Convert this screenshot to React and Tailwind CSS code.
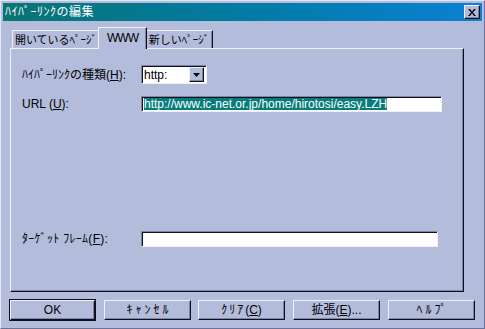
import React from 'react';

const FONT = { fontFamily: '"Liberation Sans", "Noto Sans CJK JP", sans-serif' };

// raised 3D edge used for buttons and tabs
const raised =
  'bg-[#b4bcdc] border-t border-l border-t-[#eef0fa] border-l-[#eef0fa] border-r border-b border-r-[#10101c] border-b-[#10101c] shadow-[inset_-1px_-1px_0_#7c84a8]';

const sunken =
  'bg-white border-t border-l border-t-[#7c84a8] border-l-[#7c84a8] border-r border-b border-r-[#eef0fa] border-b-[#eef0fa] shadow-[inset_1px_1px_0_#10101c]';

const Key = ({ children }) => <span className="underline underline-offset-1">{children}</span>;

const Tab = ({ label, active, w }) =>
  active ? (
    <div className={`relative z-10 -mb-px -mx-[2px] flex h-[22px] items-start justify-center whitespace-nowrap bg-[#b4bcdc] pt-[3px] border-t border-l border-t-[#eef0fa] border-l-[#eef0fa] border-r border-r-[#10101c] shadow-[inset_-1px_0_0_#7c84a8] ${w}`}>
      {label}
    </div>
  ) : (
    <div className={`flex h-[18px] items-start justify-center whitespace-nowrap pt-[2px] text-[11px] border-t border-l border-t-[#eef0fa] border-l-[#eef0fa] border-r border-r-[#10101c] shadow-[inset_-1px_0_0_#7c84a8] ${w}`}>
      {label}
    </div>
  );

const Button = ({ children, primary, gap }) =>
  primary ? (
    <div className={`border border-[#10101c] ${gap}`}>
      <div className={`flex h-[20px] w-[85px] items-center justify-center ${raised}`}>{children}</div>
    </div>
  ) : (
    <div className={`mt-px flex h-[20px] w-[87px] items-center justify-center ${raised} ${gap}`}>{children}</div>
  );

export default function App() {
  return (
    <div
      className="flex h-[329px] w-[485px] flex-col bg-[#b4bcdc] p-[2px] text-[12px] leading-[14px] text-black border-l border-t border-[#e4e8f6] border-r border-b border-r-[#6a729a] border-b-[#6a729a]"
      style={FONT}
    >
      {/* title bar */}
      <div className="flex h-[18px] items-center justify-between bg-linear-to-r from-[#0a7474] to-[#0c80d4] pl-[2px] pr-[2px]">
        <span className="text-white tracking-[0.5px]">ﾊｲﾊﾟｰﾘﾝｸの編集</span>
        <div className={`flex h-[14px] w-[16px] items-center justify-center ${raised}`}>
          <svg width="8" height="7" viewBox="0 0 8 7">
            <path d="M0 0h2l2 2.5 2-2.5h2l-3 3.5 3 3.5h-2l-2-2.5-2 2.5h-2l3-3.5z" fill="#000" />
          </svg>
        </div>
      </div>

      {/* tabs */}
      <div className="ml-[9px] mt-[6px] flex items-end">
        <Tab label="開いているﾍﾟｰｼﾞ" w="w-[88px]" />
        <Tab label={<span className="tracking-[-1px]">WWW</span>} w="w-[49px]" active />
        <Tab label="新しいﾍﾟｰｼﾞ" w="w-[68px]" />
      </div>

      {/* panel */}
      <div className="ml-[7px] flex h-[244px] w-[454px] flex-col border-t border-l border-t-[#eef0fa] border-l-[#eef0fa] border-r border-b border-r-[#10101c] border-b-[#10101c] shadow-[inset_-1px_-1px_0_#7c84a8] pl-[11px] pt-[16px]">
        <div className="flex items-center">
          <span className="w-[119px]">
            ﾊｲﾊﾟｰﾘﾝｸの種類(<Key>H</Key>):
          </span>
          <div className={`flex h-[19px] w-[66px] items-center justify-between pl-[2px] pr-[2px] ${sunken}`}>
            <span>http:</span>
            <div className={`flex h-[15px] w-[15px] items-center justify-center ${raised}`}>
              <svg width="7" height="4" viewBox="0 0 7 4">
                <path d="M0 0h7l-3.5 4z" fill="#000" />
              </svg>
            </div>
          </div>
        </div>

        <div className="mt-[12px] flex items-center">
          <span className="w-[119px]">
            URL (<Key>U</Key>):
          </span>
          <div className={`flex h-[16px] w-[301px] items-center pl-[2px] ${sunken}`}>
            <span className="bg-[#087c7c] text-white leading-[12px]">http://www.ic-net.or.jp/home/hirotosi/easy.LZH</span>
          </div>
        </div>

        <div className="mt-[119px] flex items-center">
          <span className="w-[119px] tracking-[0.3px]">
            ﾀｰｹﾞｯﾄ ﾌﾚｰﾑ(<Key>F</Key>):
          </span>
          <div className={`h-[16px] w-[297px] ${sunken}`} />
        </div>
      </div>

      {/* buttons */}
      <div className="ml-[6px] mt-[7px] flex items-start">
        <Button primary>OK</Button>
        <Button gap="ml-[8px]">
          <span className="tracking-[3px] pl-[3px]">ｷｬﾝｾﾙ</span>
        </Button>
        <Button gap="ml-[7px]">
          <span>
            <span className="tracking-[2px]">ｸﾘｱ</span>(<Key>C</Key>)
          </span>
        </Button>
        <Button gap="ml-[8px]">
          <span>
            拡張(<Key>E</Key>)...
          </span>
        </Button>
        <Button gap="ml-[8px]">
          <span className="tracking-[3px] pl-[3px]">ﾍﾙﾌﾟ</span>
        </Button>
      </div>
    </div>
  );
}
